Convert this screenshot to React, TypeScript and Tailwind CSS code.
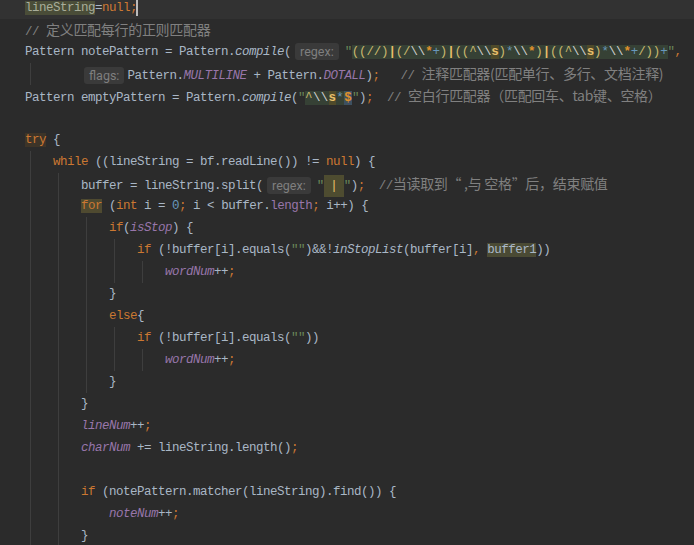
import React from "react";

type C = { children?: React.ReactNode };

const K = ({ children }: C) => <span className="text-[#cc7832]">{children}</span>;
const F = ({ children }: C) => <span className="italic text-[#9876aa]">{children}</span>;
const Fi = ({ children }: C) => <span className="text-[#9876aa]">{children}</span>;
const SM = ({ children }: C) => <span className="italic">{children}</span>;
const N = ({ children }: C) => <span className="text-[#6897bb]">{children}</span>;
const S = ({ children }: C) => <span className="text-[#6a8759]">{children}</span>;
const Cm = ({ children }: C) => <span className="text-[#808080]">{children}</span>;
const Z = ({ children }: C) => (
  <span className="font-['Noto_Sans_CJK_SC',sans-serif] text-[14px] text-[#808080] tracking-[-0.3px]">{children}</span>
);
const Hint = ({ t, m }: { t: string; m: string }) => (
  <span
    className={`inline-block align-middle leading-[17px] h-[17px] px-[5px] rounded-[3px] bg-[#3a3a3a] text-[#7f7f7f] text-[12.5px] tracking-normal font-['Roboto',sans-serif] ${m}`}
  >
    {t}
  </span>
);

const R = "text-[#c9b86e]";
const BAR = "text-[#e8bf6a] font-bold";
const ESC = "text-[#d0d0d0]";
const ECH = "text-[#e0912a] font-bold";
const Q = "text-[#6897bb]";
const CLS = "text-[#e8bf6a] font-bold bg-[#4f4a2a]";

const regex1: [string, string][] = [
  ["((//)", R],
  ["|", BAR],
  ["(/", R],
  ["\\\\", ESC],
  ["*", ECH],
  ["+", Q],
  [")", R],
  ["|", BAR],
  ["((^", R],
  ["\\\\", ESC],
  ["s", CLS],
  [")", R],
  ["*", Q],
  ["\\\\", ESC],
  ["*", ECH],
  [")", R],
  ["|", BAR],
  ["((^", R],
  ["\\\\", ESC],
  ["s", CLS],
  [")", R],
  ["*", Q],
  ["\\\\", ESC],
  ["*", ECH],
  ["+", Q],
  ["/))", R],
  ["+", Q],
];

const regex2: [string, string][] = [
  ["^", R],
  ["\\\\", ESC],
  ["s", CLS],
  ["*", Q],
  ["$", "text-[#e0912a] font-bold bg-[#3d5060]"],
];

const Rx = ({ toks, tr }: { toks: [string, string][]; tr: string }) => (
  <span className={`bg-[#364135] ${tr}`}>
    {toks.map((t, i) => (
      <span key={i} className={t[1]}>
        {t[0]}
      </span>
    ))}
  </span>
);

function Line({
  g = [],
  hl = false,
  children,
}: {
  g?: boolean[];
  hl?: boolean;
  children?: React.ReactNode;
}) {
  return (
    <div className={`flex h-[22px] shrink-0 pl-[25px] ${hl ? "bg-[#323232]" : ""}`}>
      {g.map((on, i) => (
        <span key={i} className="flex w-[28px] shrink-0">
          {on ? <span className="ml-[5px] h-full border-l border-[#3e3e3e]" /> : null}
        </span>
      ))}
      <span className="flex items-center">
        <span className="whitespace-pre leading-[22px]">{children}</span>
      </span>
    </div>
  );
}

const T = true;
const X = false;

export default function App() {
  return (
    <div className="w-[694px] h-[545px] overflow-hidden bg-[#2b2b2b]">
      <div className="flex flex-col -mt-[3px] font-['Liberation_Mono',monospace] text-[12.5px] tracking-[-0.5px] text-[#a9b7c6]">
        <Line hl>
          <span className="bg-[#4a4d38] text-[#a8ad9a]">lineString</span>
          <span>=</span>
          <K>null;</K>
          <span className="inline-block align-middle w-[2px] h-[17px] bg-[#bbbbbb] -ml-[1px]" />
        </Line>
        <Line>
          <Cm>// </Cm>
          <Z>定义匹配每行的正则匹配器</Z>
        </Line>
        <Line>
          Pattern notePattern = Pattern.<SM>compile</SM>(
          <Hint t="regex:" m="ml-[4px] mr-[6px]" />
          <S>"</S>
          <Rx toks={regex1} tr="tracking-[-0.16px]" />
          <S>"</S>
          <K>,</K>
        </Line>
        <Line g={[T, X]}>
          <Hint t="flags:" m="ml-[3px] mr-[3px]" />
          Pattern.<F>MULTILINE</F> + Pattern.<F>DOTALL</F>)<K>;</K>
          {"   "}
          <Cm>// </Cm>
          <Z>注释匹配器(匹配单行、多行、文档注释)</Z>
        </Line>
        <Line>
          Pattern emptyPattern = Pattern.<SM>compile</SM>(<S>"</S>
          <Rx toks={regex2} tr="tracking-[0.3px]" />
          <S>"</S>)<K>;</K>
          {"  "}
          <Cm>// </Cm>
          <Z>空白行匹配器（匹配回车、tab键、空格）</Z>
        </Line>
        <Line />
        <Line>
          <span className="bg-[#3d3428]">
            <K>try</K>
          </span>
          {" {"}
        </Line>
        <Line g={[T]}>
          <K>while</K> ((lineString = bf.readLine()) != <K>null</K>) {"{"}
        </Line>
        <Line g={[T, T]}>
          buffer = lineString.split(
          <Hint t="regex:" m="ml-[4px] mr-[6px]" />
          <S>"</S>
          <span className="inline-block text-center w-[20px] bg-[#4e4c30] text-[#e8bf6a]">|</span>
          <S>"</S>)<K>;</K>
          {"  "}
          <Cm>//</Cm>
          <Z>当读取到“ ,与 空格”后，结束赋值</Z>
        </Line>
        <Line g={[T, T]}>
          <span className="bg-[#4f4a30]">
            <K>for</K>
          </span>
          {" ("}
          <K>int</K> i = <N>0</N>
          <K>;</K> i {"<"} buffer.<Fi>length</Fi>
          <K>;</K> i++) {"{"}
        </Line>
        <Line g={[T, T, T]}>
          <K>if</K>(<F>isStop</F>) {"{"}
        </Line>
        <Line g={[T, T, T, T]}>
          <K>if</K> (!buffer[i].equals(<S>""</S>)&&!<SM>inStopList</SM>(buffer[i]<K>,</K>{" "}
          <span className="bg-[#4a4a34]">buffer1</span>))
        </Line>
        <Line g={[T, T, T, T, T]}>
          <F>wordNum</F>++<K>;</K>
        </Line>
        <Line g={[T, T, T]}>{"}"}</Line>
        <Line g={[T, T, T]}>
          <K>else</K>
          {"{"}
        </Line>
        <Line g={[T, T, T, T]}>
          <K>if</K> (!buffer[i].equals(<S>""</S>))
        </Line>
        <Line g={[T, T, T, T, T]}>
          <F>wordNum</F>++<K>;</K>
        </Line>
        <Line g={[T, T, T]}>{"}"}</Line>
        <Line g={[T, T]}>{"}"}</Line>
        <Line g={[T, T]}>
          <F>lineNum</F>++<K>;</K>
        </Line>
        <Line g={[T, T]}>
          <F>charNum</F> += lineString.length()<K>;</K>
        </Line>
        <Line g={[T, T]} />
        <Line g={[T, T]}>
          <K>if</K> (notePattern.matcher(lineString).find()) {"{"}
        </Line>
        <Line g={[T, T, X]}>
          <F>noteNum</F>++<K>;</K>
        </Line>
        <Line g={[T, T]}>{"}"}</Line>
        <Line g={[T]} />
      </div>
    </div>
  );
}
